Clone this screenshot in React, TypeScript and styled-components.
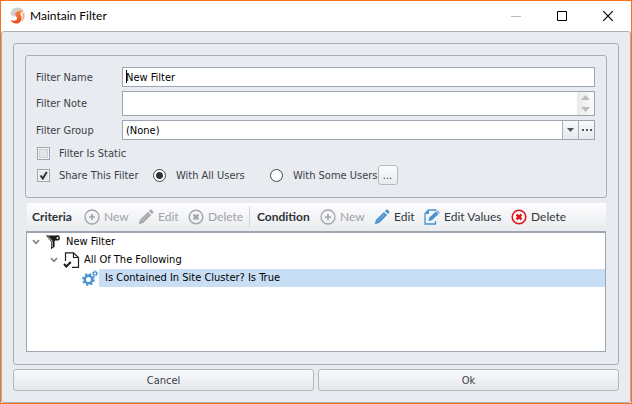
import React, { useState } from "react";
import styled, { createGlobalStyle, css } from "styled-components";

const line = "#a9afb7";
const fieldLine = "#9da5b0";
const ui = `"DejaVu Sans Condensed", "Noto Sans", sans-serif`;
const shell = `Lato, "Open Sans", sans-serif`;

const Global = createGlobalStyle`
  *, *::before, *::after { box-sizing: border-box; }
  body { margin: 0; background: #e8ebf0; }
  button, input, select, textarea { font: inherit; color: inherit; margin: 0; }
`;

const Window = styled.div`
  min-height: 100vh;
  display: flex;
  flex-direction: column;
  border: 1px solid #f7701d;
  background: #fff;
  color: #3c4046;
  font: 11px/15px ${ui};
`;

const TitleBar = styled.header`
  display: flex;
  align-items: center;
  height: 30px;
  padding-left: 8px;
`;

const Title = styled.h1`
  flex: 1;
  margin: 0 0 0 3px;
  color: #000;
  font: 12px/16px ${shell};
`;

const WindowButton = styled.button`
  display: flex;
  align-items: center;
  justify-content: center;
  width: 46px;
  height: 28px;
  padding: 0;
  border: 0;
  background: none;
`;

const Body = styled.main`
  flex: 1;
  display: flex;
  flex-direction: column;
  gap: 4px;
  padding: 11px;
  border: 1px solid ${line};
  border-radius: 3px;
  background: #e8ebf0;
`;

const Panel = styled.section`
  flex: 1;
  display: flex;
  flex-direction: column;
  gap: 5px;
  padding: 11px 11px 12px;
  border: 1px solid ${line};
  border-radius: 3px;
`;

const Group = styled.div`
  display: flex;
  flex-direction: column;
  padding: 11px 11px 12px 10px;
  border: 1px solid ${line};
  border-radius: 3px;
`;

const Fields = styled.div`
  display: grid;
  grid-template-columns: 82px 1fr;
  column-gap: 4px;
  row-gap: 4px;
  align-items: center;
`;

const Box = styled.div`
  position: relative;
  display: flex;
  border: 1px solid ${fieldLine};
  background: #fff;
  color: #000;
`;

const entry = css`
  flex: 1;
  min-width: 0;
  height: 18px;
  padding: 0 3px;
  border: 0;
  outline: 0;
  background: transparent;
`;

const TextInput = styled.input`${entry}`;

const NoteInput = styled.textarea`
  ${entry}
  height: 23px;
  padding: 4px 3px;
  resize: none;
  overflow: hidden;
`;

const GroupSelect = styled.select`
  width: 100%;
  ${entry}
  padding-right: 18px;
  appearance: none;
`;

const Caret = styled.span`
  position: absolute;
  left: 3px;
  top: 2px;
  width: 1px;
  height: 13px;
  background: #000;
`;

const SelectWrap = styled.div`
  position: relative;
  flex: 1;
  display: flex;
`;

const Arrow = styled.span`
  position: absolute;
  right: 0;
  top: 0;
  display: flex;
  align-items: center;
  justify-content: center;
  width: 16px;
  height: 18px;
  border-left: 1px solid ${line};
  background: linear-gradient(#f7f9fb, #e6e9ed);
  pointer-events: none;
`;

const DotsButton = styled.button`
  display: flex;
  align-items: center;
  justify-content: center;
  width: 16px;
  height: 18px;
  padding: 0;
  border: 0;
  border-left: 1px solid ${line};
  background: linear-gradient(#f7f9fb, #e6e9ed);
`;

const Scroller = styled.div`
  display: flex;
  flex-direction: column;
  width: 17px;
  background: linear-gradient(90deg, #eaeaea, #fbfbfb);
`;

const ScrollButton = styled.button`
  flex: 1;
  display: flex;
  align-items: center;
  justify-content: center;
  padding: 0;
  border: 0;
  background: none;
`;

const Options = styled.div`
  display: flex;
  flex-direction: column;
  gap: 2px;
  padding: 3px 0 0 1px;
`;

const OptionRow = styled.div`
  display: flex;
  align-items: center;
  min-height: 20px;
`;

const Choice = styled.label<{ $width?: number; $gap?: number }>`
  display: flex;
  align-items: center;
  gap: ${(p) => p.$gap ?? 9}px;
  width: ${(p) => (p.$width ? `${p.$width}px` : "auto")};
  white-space: nowrap;
`;

const Check = styled.input.attrs({ type: "checkbox" })`
  appearance: none;
  flex: none;
  width: 13px;
  height: 13px;
  border: 1px solid #9da5b0;
  background: #e5e5e6;
  box-shadow: inset 0 0 0 1px #f3f4f6, inset 0 0 0 2px #cdcfd2;
  &:checked {
    background: url("data:image/svg+xml,%3Csvg xmlns='http://www.w3.org/2000/svg' width='11' height='11'%3E%3Cpath d='M2.5 5.5 4.8 8.5 8.8 2' fill='none' stroke='%23333' stroke-width='2'/%3E%3C/svg%3E") #e8e9eb;
    box-shadow: inset 0 0 0 1px #f3f4f6;
  }
`;

const Radio = styled.input.attrs({ type: "radio" })`
  appearance: none;
  flex: none;
  width: 13px;
  height: 13px;
  border: 1px solid #42464b;
  border-radius: 50%;
  background: #fff;
  &:checked { background: radial-gradient(circle, #303235 3px, #fff 4px); }
`;

const SmallButton = styled.button`
  width: 20px;
  height: 20px;
  padding: 0;
  display: flex;
  align-items: center;
  justify-content: center;
  border: 1px solid #b6babf;
  border-radius: 3px;
  background: linear-gradient(#fbfcfd, #e8ebee);
`;

const Criteria = styled.div`
  flex: 1;
  display: flex;
  flex-direction: column;
  margin: 0 1px;
`;

const Toolbar = styled.div`
  display: flex;
  align-items: center;
  height: 28px;
  margin-left: 1px;
  padding-left: 5px;
  background: linear-gradient(#fdfdfe, #e9ebee);
  font: 12px/16px ${shell};
`;

const ToolHeading = styled.strong<{ $width: number }>`
  width: ${(p) => p.$width}px;
  color: #2f3338;
  font-weight: 700;
`;

const Tool = styled.button<{ $width: number }>`
  display: flex;
  align-items: center;
  gap: 4px;
  width: ${(p) => p.$width}px;
  padding: 0;
  border: 0;
  background: none;
  color: #33373c;
  white-space: nowrap;
  svg { flex: none; }
  &:disabled { color: #a0a3a8; }
`;

const Divider = styled.span`
  width: 1px;
  height: 20px;
  margin-right: 7px;
  background: #cfd2d6;
`;

const Tree = styled.ul`
  flex: 1;
  margin: 0;
  padding: 0;
  list-style: none;
  border: 1px solid ${fieldLine};
  border-top-width: 2px;
  background: #fff;
  color: #000;
`;

const Node = styled.li<{ $depth: number }>`
  display: flex;
  align-items: center;
  height: 18px;
  padding-left: ${(p) => p.$depth * 18}px;
`;

const Expander = styled.button`
  display: flex;
  align-items: center;
  justify-content: center;
  width: 18px;
  height: 18px;
  padding: 0;
  border: 0;
  background: none;
`;

const NodeLabel = styled.span<{ $selected?: boolean }>`
  flex: 1;
  padding: 0 6px 0 ${(p) => (p.$selected ? 6 : 4)}px;
  line-height: 18px;
  background: ${(p) => (p.$selected ? "#c8def4" : "transparent")};
`;

const Actions = styled.footer`
  display: grid;
  grid-template-columns: 1fr 1fr;
  gap: 4px;
`;

const Action = styled.button`
  height: 22px;
  padding: 0;
  border: 1px solid #b3b8be;
  border-radius: 3px;
  background: linear-gradient(#f8fafc, #e5e8eb);
`;

const Logo = () => (
  <svg width="18" height="18" viewBox="0 0 18 18" aria-hidden="true">
    <defs>
      <linearGradient id="flame" x1="0" y1="0" x2="0" y2="1">
        <stop offset="0" stopColor="#f58a4a" />
        <stop offset="1" stopColor="#e8481c" />
      </linearGradient>
    </defs>
    <path d="M1.500 6.500C2.200 2.500 5.500.3 9 .6c3.200.2 5 1.700 5.700 3.700C12 3 8.500 3.200 6.800 5 5.500 6.300 5.800 8 6.800 9.300 4.500 9.800 2 9 1.500 6.500Z" fill="#cdd1d5" />
    <path d="M14.800 3.900C10.500 2.600 6.300 4 6 6.700c-.2 2 2.200 2.800 2 5-.2 2.300-3.700 2.400-6.400 1.300 1.600 3.400 6.300 4.700 9.300 2.200 2.400-2 2-5 .9-7.200-.8-1.700-.2-3 3-4.100Z" fill="url(#flame)" />
    <path d="M13 6c1.800-.6 2.300-.5 2.500.8.500 3-.3 6-2.900 8.200C13.800 12 14.200 9 13 6Z" fill="#f3ab84" />
  </svg>
);

const Plus = () => (
  <svg width="16" height="16" viewBox="0 0 16 16" fill="none" stroke="#a3a6aa" aria-hidden="true">
    <circle cx="8" cy="8" r="7" strokeWidth="1.300" />
    <path d="M8 5v6M5 8h6" strokeWidth="1.700" />
  </svg>
);

const Cross = ({ color }: { color: string }) => (
  <svg width="16" height="16" viewBox="0 0 16 16" fill="none" stroke={color} aria-hidden="true">
    <circle cx="8" cy="8" r="6.800" strokeWidth="1.500" />
    <path d="m5.600 5.600 4.800 4.800M10.400 5.600l-4.800 4.800" strokeWidth="2.400" />
  </svg>
);

const Pencil = ({ color }: { color: string }) => (
  <svg width="16" height="16" viewBox="0 0 16 16" fill={color} aria-hidden="true">
    <path d="M.8 15.200 2 10.800 10 2.900l3.200 3.200-8 7.900Z" />
    <path d="m10.900 2 1.300-1.200c.5-.4 1-.4 1.400 0l1.600 1.600c.4.5.4 1 0 1.400L14 5.100Z" />
    <path d="m3.200 12.500 7.500-7.600" stroke="#fff" strokeOpacity=".4" strokeWidth=".8" />
  </svg>
);

const PageEdit = () => (
  <svg width="16" height="16" viewBox="0 0 16 16" fill="none" aria-hidden="true">
    <path d="M11.500 2V1H4.500L1 4.500V15h10.500v-3" stroke="#4b92cf" strokeWidth="1.300" />
    <path d="M1 5h4V1Z" fill="#4b92cf" />
    <path d="m4.500 12 .8-3.400 6.700-6.200 2.600 2.600L7.900 11.200Z" fill="#4b92cf" />
    <path d="m12.500 1.900.8-.7 2.500 2.500-.7.800Z" fill="#4b92cf" />
  </svg>
);

const Chevron = () => (
  <svg width="8" height="6" viewBox="0 0 8 6" fill="none" stroke="#7e8288" strokeWidth="1.700" aria-hidden="true">
    <path d="M1 1.200 4 4.300 7 1.200" />
  </svg>
);

const Funnel = () => (
  <svg width="17" height="16" viewBox="0 0 17 16" aria-hidden="true">
    <path d="M1 1.500h13.500L9.600 7.500v5.300L6 15.300V7.500Z" fill="#1d1d1d" />
    <path d="m3.200 2.500 4 4.600v6" stroke="#fff" strokeWidth=".8" fill="none" />
    <circle cx="12.300" cy="4" r="2.600" fill="#1d1d1d" />
    <circle cx="12.500" cy="4" r="1" fill="#fff" />
  </svg>
);

const PageCheck = () => (
  <svg width="17" height="16" viewBox="0 0 17 16" fill="none" stroke="#1d1d1d" aria-hidden="true">
    <path d="M2.500 9V.8H10.500L15.500 5.500v9.800H9" strokeWidth="1.200" />
    <path d="M10.500.8v4.700h5" strokeWidth="1.200" />
    <path d="m1 12 2.300 2.400L7.800 10" strokeWidth="2.100" />
  </svg>
);

const Gears = () => (
  <svg width="18" height="17" viewBox="0 0 18 17" fill="none" stroke="#4b92cf" aria-hidden="true">
    <circle cx="7.500" cy="9.500" r="3.700" strokeWidth="2.400" />
    <circle cx="7.500" cy="9.500" r="5.400" strokeWidth="1.900" strokeDasharray="2.120 2.120" />
    <circle cx="14" cy="3.500" r="1.700" strokeWidth="1.200" />
    <circle cx="14" cy="3.500" r="2.700" strokeWidth=".9" strokeDasharray="1.060 1.060" />
  </svg>
);

const Triangle = ({ up }: { up?: boolean }) => (
  <svg width="9" height="5" viewBox="0 0 9 5" aria-hidden="true">
    <path d={up ? "M4.500 0 9 5H0Z" : "M0 0h9L4.500 5Z"} fill="#bcbcbc" />
  </svg>
);

export default function App() {
  const [name, setName] = useState("New Filter");
  const [note, setNote] = useState("");
  const [isStatic, setStatic] = useState(false);
  const [shared, setShared] = useState(true);
  const [scope, setScope] = useState("all");

  return (
    <>
      <Global />
      <Window>
        <TitleBar>
          <Logo />
          <Title>Maintain Filter</Title>
          <WindowButton aria-label="Minimize">
            <svg width="10" height="10"><path d="M0 5.500h10" stroke="#bbb" /></svg>
          </WindowButton>
          <WindowButton aria-label="Maximize">
            <svg width="10" height="10"><path d="M.5.5h9v9h-9Z" fill="none" stroke="#000" /></svg>
          </WindowButton>
          <WindowButton aria-label="Close">
            <svg width="10" height="10"><path d="m0 0 10 10M10 0 0 10" stroke="#000" strokeWidth="1.200" /></svg>
          </WindowButton>
        </TitleBar>
        <Body>
          <Panel>
            <Group>
              <Fields>
                <label htmlFor="name">Filter Name</label>
                <Box>
                  <TextInput id="name" value={name} onChange={(e) => setName(e.target.value)} />
                  <Caret />
                </Box>
                <label htmlFor="note">Filter Note</label>
                <Box>
                  <NoteInput id="note" rows={1} value={note} onChange={(e) => setNote(e.target.value)} />
                  <Scroller>
                    <ScrollButton aria-label="Scroll up"><Triangle up /></ScrollButton>
                    <ScrollButton aria-label="Scroll down"><Triangle /></ScrollButton>
                  </Scroller>
                </Box>
                <label htmlFor="group">Filter Group</label>
                <Box>
                  <SelectWrap>
                    <GroupSelect id="group"><option>(None)</option></GroupSelect>
                    <Arrow>
                      <svg width="7" height="4"><path d="M0 0h7L3.500 4Z" fill="#50565e" /></svg>
                    </Arrow>
                  </SelectWrap>
                  <DotsButton aria-label="Browse groups">
                    <svg width="10" height="2" fill="#50565e"><path d="M0 0h2v2H0ZM4 0h2v2H4ZM8 0h2v2H8Z" /></svg>
                  </DotsButton>
                </Box>
              </Fields>
              <Options>
                <OptionRow>
                  <Choice>
                    <Check checked={isStatic} onChange={(e) => setStatic(e.target.checked)} />
                    Filter Is Static
                  </Choice>
                </OptionRow>
                <OptionRow>
                  <Choice $width={116}>
                    <Check checked={shared} onChange={(e) => setShared(e.target.checked)} />
                    Share This Filter
                  </Choice>
                  <Choice $width={117} $gap={10}>
                    <Radio name="scope" checked={scope === "all"} onChange={() => setScope("all")} />
                    With All Users
                  </Choice>
                  <Choice $gap={10}>
                    <Radio name="scope" checked={scope === "some"} onChange={() => setScope("some")} />
                    With Some Users
                  </Choice>
                  <SmallButton aria-label="Choose users">...</SmallButton>
                </OptionRow>
              </Options>
            </Group>
            <Criteria>
              <Toolbar>
                <ToolHeading $width={52}>Criteria</ToolHeading>
                <Tool $width={54} disabled><Plus />New</Tool>
                <Tool $width={50} disabled><Pencil color="#a3a6aa" />Edit</Tool>
                <Tool $width={61} disabled><Cross color="#a3a6aa" />Delete</Tool>
                <Divider />
                <ToolHeading $width={63}>Condition</ToolHeading>
                <Tool $width={54} disabled><Plus />New</Tool>
                <Tool $width={50}><Pencil color="#4b92cf" />Edit</Tool>
                <Tool $width={87}><PageEdit />Edit Values</Tool>
                <Tool $width={61}><Cross color="#df1119" />Delete</Tool>
              </Toolbar>
              <Tree>
                <Node $depth={0}>
                  <Expander aria-label="Collapse New Filter"><Chevron /></Expander>
                  <Funnel />
                  <NodeLabel>New Filter</NodeLabel>
                </Node>
                <Node $depth={1}>
                  <Expander aria-label="Collapse All Of The Following"><Chevron /></Expander>
                  <PageCheck />
                  <NodeLabel>All Of The Following</NodeLabel>
                </Node>
                <Node $depth={3}>
                  <Gears />
                  <NodeLabel $selected>Is Contained In Site Cluster? Is True</NodeLabel>
                </Node>
              </Tree>
            </Criteria>
          </Panel>
          <Actions>
            <Action>Cancel</Action>
            <Action>Ok</Action>
          </Actions>
        </Body>
      </Window>
    </>
  );
}
